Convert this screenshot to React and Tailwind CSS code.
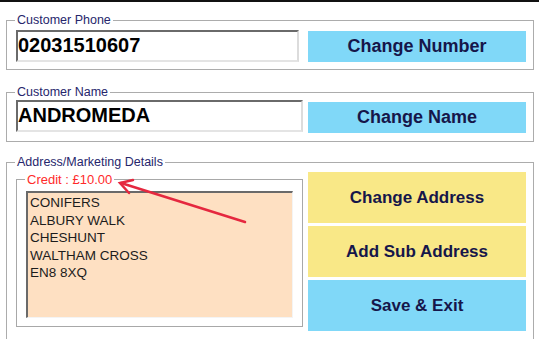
import React from 'react';

// colours picked from the screenshot
const FONT = { fontFamily: '"Liberation Sans", Arial, sans-serif' };

const GroupLegend = ({ children, className = '' }) => (
  <legend className={`-ml-[1px] px-[2px] text-[12.5px] leading-[14px] text-[#26266c] ${className}`}>
    {children}
  </legend>
);

const SunkenField = ({ value, className = '' }) => (
  <div
    className={`flex h-[32px] items-center border-t-2 border-l-2 border-b-2 border-r-2 border-t-[#6a6a6a] border-l-[#6a6a6a] border-b-[#e4e4e4] border-r-[#dcdcdc] bg-white pb-[3px] text-[20px] font-bold leading-none text-black ${className}`}
  >
    {value}
  </div>
);

const FlatButton = ({ label, color, className = '' }) => (
  <button
    type="button"
    className={`flex w-[218px] items-center justify-center font-bold text-[#16164a] ${color} ${className}`}
  >
    {label}
  </button>
);

const ADDRESS = ['CONIFERS', 'ALBURY WALK', 'CHESHUNT', 'WALTHAM CROSS', 'EN8 8XQ'];

export default function App() {
  return (
    <div className="relative h-[339px] w-[539px] overflow-hidden bg-white" style={FONT}>
      <div className="h-[2px] w-full bg-[#111]" />

      {/* Customer Phone */}
      <fieldset className="mx-[6px] mt-[11px] w-[527px] border border-[#acacac] pt-[3px] pr-[7px] pb-[7px] pl-[9px]">
        <GroupLegend>Customer Phone</GroupLegend>
        <div className="flex items-start gap-[9px]">
          <SunkenField value="02031510607" className="w-[283px]" />
          <FlatButton label="Change Number" color="bg-[#80d8f8]" className="mt-[1px] h-[31px] text-[18px]" />
        </div>
      </fieldset>

      {/* Customer Name */}
      <fieldset className="mx-[6px] mt-[15px] w-[527px] border border-[#acacac] pt-[1px] pr-[7px] pb-[8px] pl-[9px]">
        <GroupLegend>Customer Name</GroupLegend>
        <div className="flex items-start gap-[5px]">
          <SunkenField value="ANDROMEDA" className="w-[287px]" />
          <FlatButton label="Change Name" color="bg-[#80d8f8]" className="mt-[2px] h-[31px] text-[18px]" />
        </div>
      </fieldset>

      {/* Address/Marketing Details */}
      <fieldset className="mx-[6px] mt-[13px] w-[527px] border border-[#acacac] pt-[3px] pr-[7px] pb-[14px] pl-[9px]">
        <GroupLegend>Address/Marketing Details</GroupLegend>
        <div className="flex items-start gap-[5px]">
          <fieldset className="w-[287px] border border-[#a8a8a8] pt-[4px] pr-[9px] pb-[8px] pl-[9px]">
            <legend className="-ml-[1px] px-[2px] text-[13px] leading-[15px] text-[#ff2a2a]">Credit : £10.00</legend>
            <div className="h-[127px] w-[267px] border-t-2 border-l-2 border-b border-r border-t-[#6a6a6a] border-l-[#6a6a6a] border-b-[#f4f4f4] border-r-[#f4f4f4] bg-[#fee0c2] pt-[1px] pl-[2px] text-[13.5px] leading-[17.5px] text-[#1c1c1c]">
              {ADDRESS.map((line) => (
                <div key={line}>{line}</div>
              ))}
            </div>
          </fieldset>
          <div className="flex flex-col gap-[3px]">
            <FlatButton label="Change Address" color="bg-[#f9e887]" className="h-[51px] text-[17px]" />
            <FlatButton label="Add Sub Address" color="bg-[#f9e887]" className="h-[51px] text-[17px]" />
            <FlatButton label="Save & Exit" color="bg-[#80d8f8]" className="h-[51px] text-[17px]" />
          </div>
        </div>
      </fieldset>

      {/* red annotation arrow */}
      <svg className="pointer-events-none absolute left-0 top-0" width="539" height="339">
        <g stroke="#e5283f" strokeWidth="2.5" strokeLinecap="round" fill="none">
          <line x1="245" y1="222" x2="121" y2="183" />
          <polyline points="133,180 120,183 129,193" />
        </g>
      </svg>
    </div>
  );
}
